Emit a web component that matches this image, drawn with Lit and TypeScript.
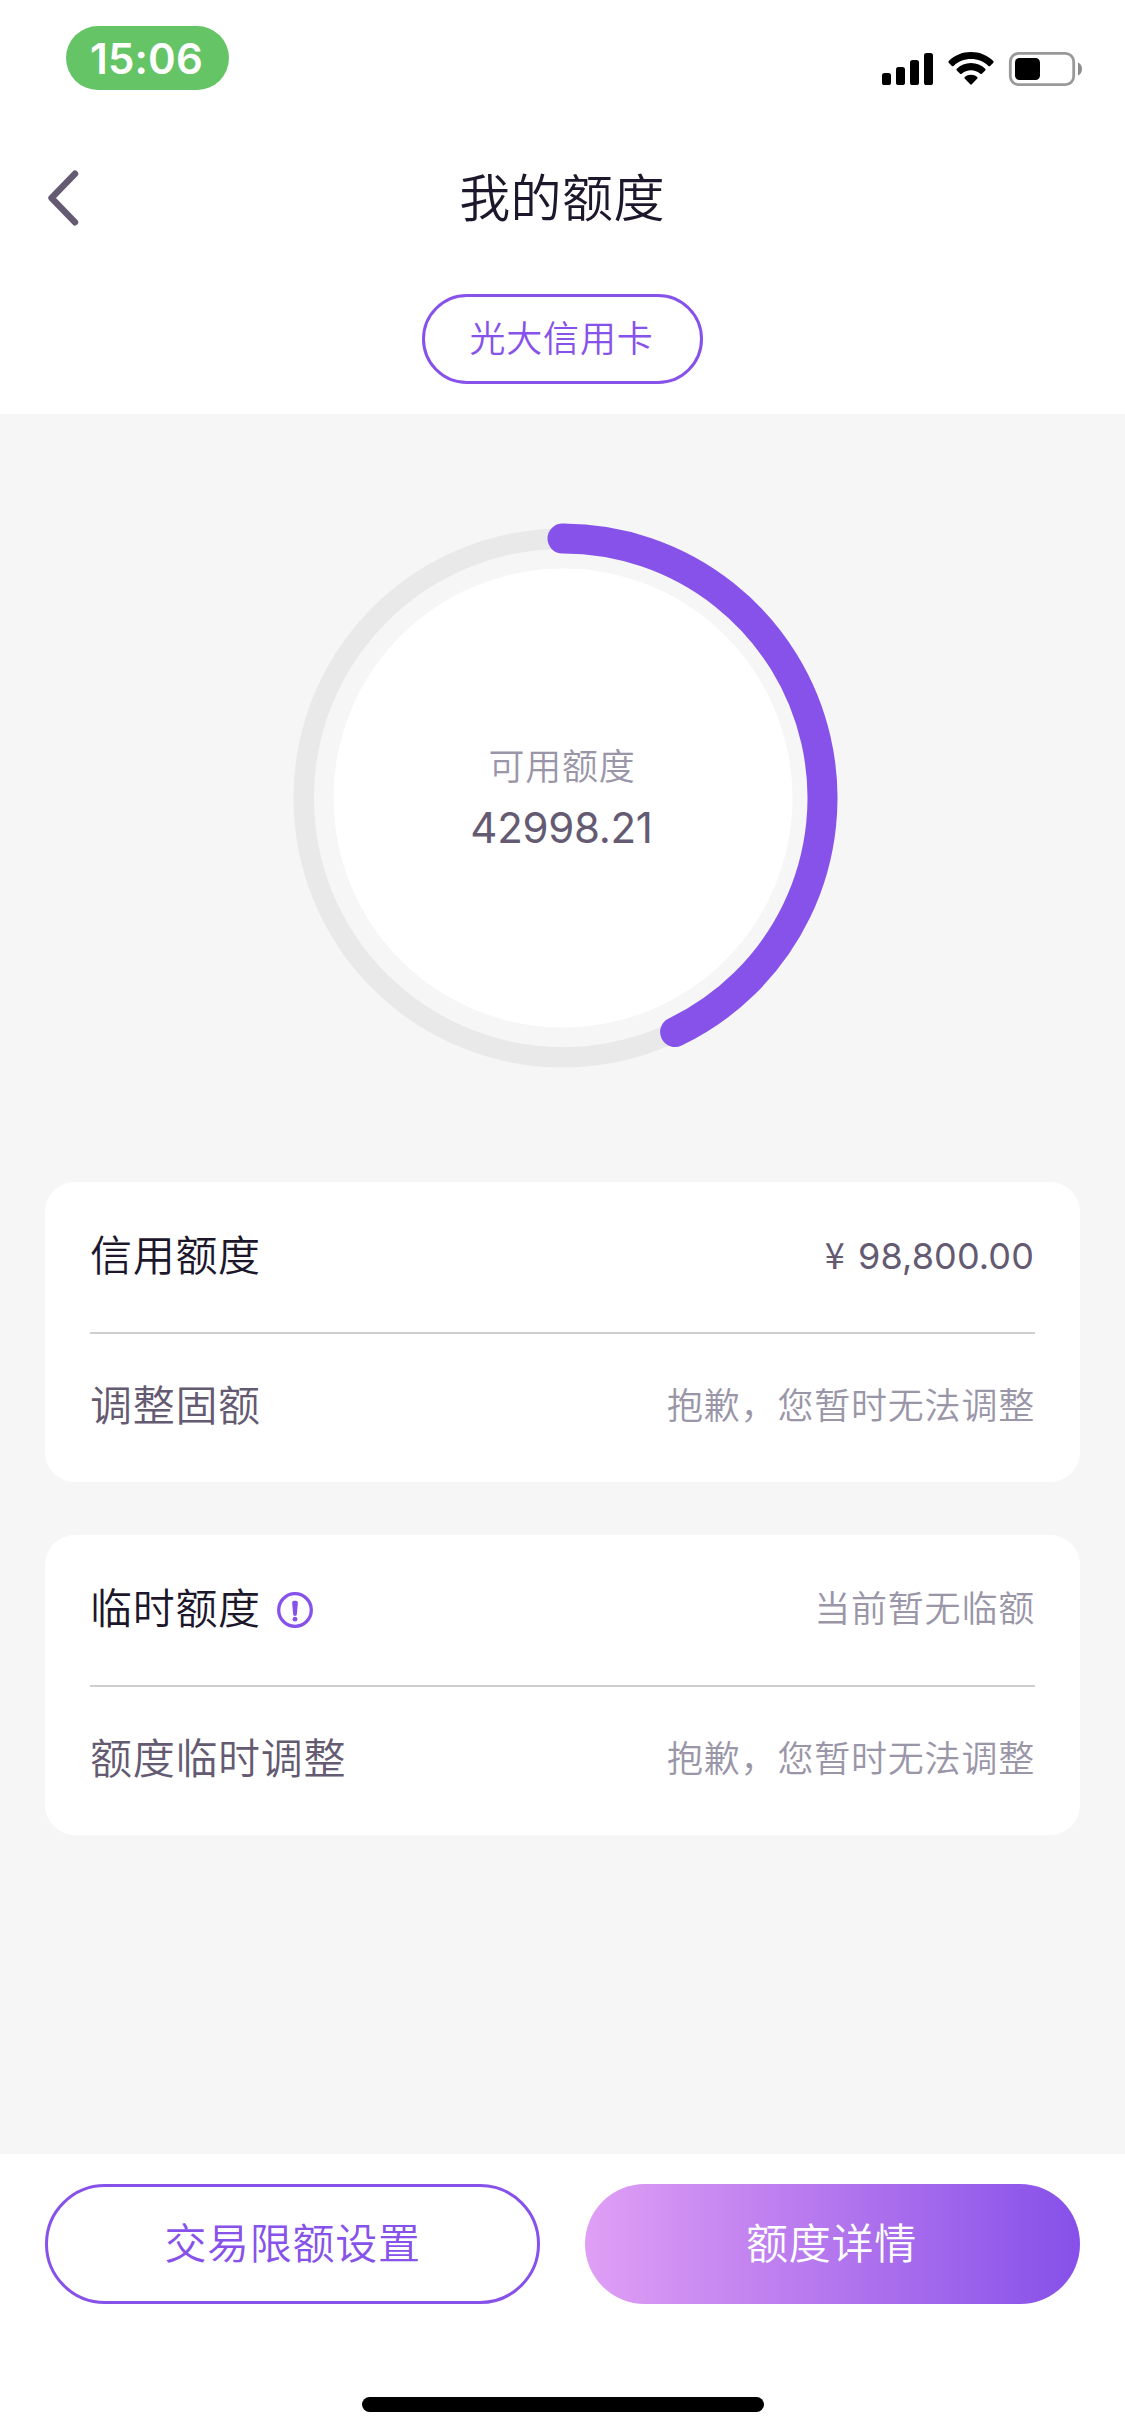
import { LitElement, html, css, svg, nothing } from "lit";
import { customElement, property } from "lit/decorators.js";

@customElement("status-bar")
class StatusBar extends LitElement {
  static styles = css`
    :host { display: flex; justify-content: space-between; height: 132px; padding: 26px 43px 0 66px; box-sizing: border-box; }
    .time { display: flex; align-items: center; justify-content: center; width: 163px; height: 64px; box-sizing: border-box; padding: 2px 2px 0 0;
      border-radius: 32px; background: #65c466; color: #fff; font-size: 42px; font-weight: 600; line-height: 62px; letter-spacing: 0.2px; }
    .icons { display: block; width: 202px; height: 40px; margin-top: 23px; }
  `;
  render() {
    return html`
      <div class="time">15:06</div>
      <svg class="icons" viewBox="880 49 202 40">
        <rect x="882" y="73" width="9" height="12" rx="2.6" />
        <rect x="896" y="67" width="9" height="18" rx="2.6" />
        <rect x="910" y="60" width="9" height="25" rx="2.6" />
        <rect x="924" y="53" width="9" height="32" rx="2.6" />
        <path d="M971 52c8.700 0 16.700 3.400 22.300 9 .5.500.5 1.200 0 1.700l-3.200 3.200c-.5.500-1.200.5-1.700 0-4.500-4.300-10.700-6.900-17.400-6.900s-12.900 2.600-17.400 6.900c-.5.500-1.200.5-1.700 0l-3.200-3.200c-.5-.500-.5-1.200 0-1.700 5.600-5.600 13.600-9 22.300-9z" />
        <path d="M971 63c5.500 0 10.500 2.200 14.200 5.700.5.500.5 1.200 0 1.700l-3.300 3.300c-.5.500-1.100.5-1.600 0-2.500-2.200-5.800-3.500-9.300-3.500s-6.800 1.300-9.300 3.500c-.5.500-1.100.5-1.600 0l-3.300-3.300c-.5-.500-.5-1.200 0-1.700 3.700-3.500 8.700-5.700 14.200-5.700z" />
        <path d="M971 74.700c2.400 0 4.500.8 6.200 2.200.5.500.5 1.100.1 1.600l-5.500 5.700c-.5.500-1.100.5-1.600 0l-5.500-5.700c-.4-.500-.4-1.100.1-1.600 1.700-1.400 3.800-2.200 6.200-2.200z" />
        <rect x="1010.300" y="53.300" width="63.400" height="31.400" rx="8.500" fill="none" stroke="#999" stroke-width="2.800" />
        <rect x="1015" y="58" width="25" height="22" rx="4.500" />
        <path d="M1078 62.500c2.500 1 4 3.500 4 6.500s-1.500 5.500-4 6.500z" fill="#8c8c8c" />
      </svg>
    `;
  }
}

@customElement("limit-gauge")
class LimitGauge extends LitElement {
  @property() label = "";
  @property() amount = "";
  @property({ type: Number }) sweep = 0;

  static styles = css`
    :host { display: grid; width: 548px; height: 548px; }
    .ring, .text { grid-area: 1 / 1; }
    .ring { display: block; width: 548px; height: 548px; overflow: visible; }
    .text { display: flex; flex-direction: column; align-items: center; padding-top: 218px; }
    .label { font-size: 36px; line-height: 50px; padding-right: 1px; letter-spacing: 0.8px; color: #9a96a8; }
    .amount { font-size: 42px; line-height: 60px; margin-top: 6px; padding-right: 2px; color: #645a72; font-weight: 400; letter-spacing: -0.3px; }
  `;

  render() {
    const r = 259.5;
    const a = (this.sweep * Math.PI) / 180;
    const x = 274 + r * Math.sin(a);
    const y = 274 - r * Math.cos(a);
    return html`
      <svg class="ring" viewBox="0 0 548 548">
        <circle cx="274" cy="274" r="259.300" fill="none" stroke="#e9e9e9" stroke-width="20.500" />
        <circle cx="274" cy="274" r="229.500" fill="#fff" />
        ${svg`<path d="M273.500 ${274 - r}A${r} ${r} 0 0 1 ${x} ${y}" fill="none" stroke="#8752ea" stroke-width="30" stroke-linecap="round" />`}
      </svg>
      <div class="text">
        <span class="label">${this.label}</span>
        <span class="amount">${this.amount}</span>
      </div>
    `;
  }
}

interface Row {
  name: string;
  value: string;
  primary?: boolean;
  info?: boolean;
  money?: boolean;
}

@customElement("limit-card")
class LimitCard extends LitElement {
  @property({ attribute: false }) rows: Row[] = [];

  static styles = css`
    :host { display: block; height: 300px; padding: 0 45px; box-sizing: border-box; border-radius: 30px; background: #fff; }
    .row { display: flex; align-items: center; justify-content: space-between; height: 148px; padding-bottom: 4px; box-sizing: border-box; }
    .row:first-child { height: 152px; padding-bottom: 2px; border-bottom: 2px solid #cfcfcf; }
    .name { display: flex; align-items: center; font-size: 42px; line-height: 60px; letter-spacing: 0.7px; color: #645a72; }
    .primary { color: #1d172c; }
    .info { display: block; width: 36px; height: 36px; margin: 2px 0 0 16px; }
    .value { font-size: 36px; line-height: 50px; letter-spacing: 0.8px; color: #9a96a8; }
    .money { color: #645a72; font-weight: 400; letter-spacing: 0.1px; padding: 0 1px 4px 0; }
    .yen { font-family: "Noto Sans CJK SC", sans-serif; font-weight: 400; margin-right: 3px; }
  `;

  render() {
    return this.rows.map(
      (r) => html`<div class="row">
        <div class="name ${r.primary ? "primary" : ""}">
          <span>${r.name}</span>
          ${r.info
            ? html`<svg class="info" viewBox="0 0 36 36">
                <circle cx="18" cy="18" r="16.300" fill="none" stroke="#8752ea" stroke-width="3.300" />
                <path d="M15.100 10.700c0-1.400 1.200-2 2.900-2s2.900.6 2.900 2l-1 11.300c-.1 1.300-.8 1.900-1.900 1.900s-1.800-.6-1.900-1.900z" fill="#8752ea" />
                <circle cx="18" cy="27.200" r="2.400" fill="#8752ea" />
              </svg>`
            : nothing}
        </div>
        ${r.money
          ? html`<span class="value money"><span class="yen">¥</span> ${r.value}</span>`
          : html`<span class="value">${r.value}</span>`}
      </div>`
    );
  }
}

@customElement("app-root")
class AppRoot extends LitElement {
  static styles = css`
    :host { display: flex; flex-direction: column; width: 1125px; height: 2436px; overflow: hidden; background: #fff;
      font-family: Inter, "Noto Sans CJK SC", sans-serif; font-weight: 350; }
    .nav { display: grid; grid-template-columns: 120px 1fr 120px; align-items: center; height: 132px; }
    .back { display: block; width: 40px; height: 60px; margin-left: 43px; }
    .title { font-size: 51px; line-height: 72px; padding: 1px 1px 0 0; text-align: center; color: #1d172c; letter-spacing: 0.4px; }
    .tabs { display: flex; justify-content: center; height: 150px; padding-top: 30px; box-sizing: border-box; }
    .tab { display: flex; align-items: center; justify-content: center; width: 281px; height: 90px; box-sizing: border-box; padding: 0 2px 7px 0;
      border: 3px solid #8752ea; border-radius: 45px; font-size: 36px; letter-spacing: 0.8px; color: #8752ea; }
    .main { display: flex; flex-direction: column; align-items: center; flex: 1; background: #f6f6f6; padding: 110px 45px 0; }
    .cards { display: flex; flex-direction: column; gap: 53px; width: 1035px; margin-top: 110px; }
    .footer { display: flex; gap: 45px; height: 243px; padding: 30px 45px 0; box-sizing: border-box; }
    .btn { display: flex; width: 495px; align-items: center; justify-content: center; height: 120px; box-sizing: border-box; padding-bottom: 8px;
      border-radius: 60px; font-size: 42px; letter-spacing: 0.7px; }
    .outline { border: 3px solid #8752ea; color: #8752ea; }
    .solid { padding-right: 2px; background: linear-gradient(90deg, #e09ff5, #b87aee 45%, #8650e9); color: #fff; }
    .home { align-self: center; width: 402px; height: 15px; margin-bottom: 24px; border-radius: 7.5px; background: #000; }
  `;

  render() {
    const credit: Row[] = [
      { name: "信用额度", value: "98,800.00", primary: true, money: true },
      { name: "调整固额", value: "抱歉，您暂时无法调整" },
    ];
    const temp: Row[] = [
      { name: "临时额度", value: "当前暂无临额", primary: true, info: true },
      { name: "额度临时调整", value: "抱歉，您暂时无法调整" },
    ];
    return html`
      <status-bar></status-bar>
      <div class="nav">
        <svg class="back" viewBox="0 0 40 60">
          <path d="M32 5.700 8.500 30 32 54.300" fill="none" stroke="#645a72" stroke-width="6.400" stroke-linecap="round" stroke-linejoin="round" />
        </svg>
        <div class="title" lang="zh-CN">我的额度</div>
      </div>
      <div class="tabs"><div class="tab" lang="zh-CN">光大信用卡</div></div>
      <div class="main" lang="zh-CN">
        <limit-gauge label="可用额度" amount="42998.21" .sweep=${154.4}></limit-gauge>
        <div class="cards">
          <limit-card .rows=${credit}></limit-card>
          <limit-card .rows=${temp}></limit-card>
        </div>
      </div>
      <div class="footer" lang="zh-CN">
        <div class="btn outline">交易限额设置</div>
        <div class="btn solid">额度详情</div>
      </div>
      <div class="home"></div>
    `;
  }
}
